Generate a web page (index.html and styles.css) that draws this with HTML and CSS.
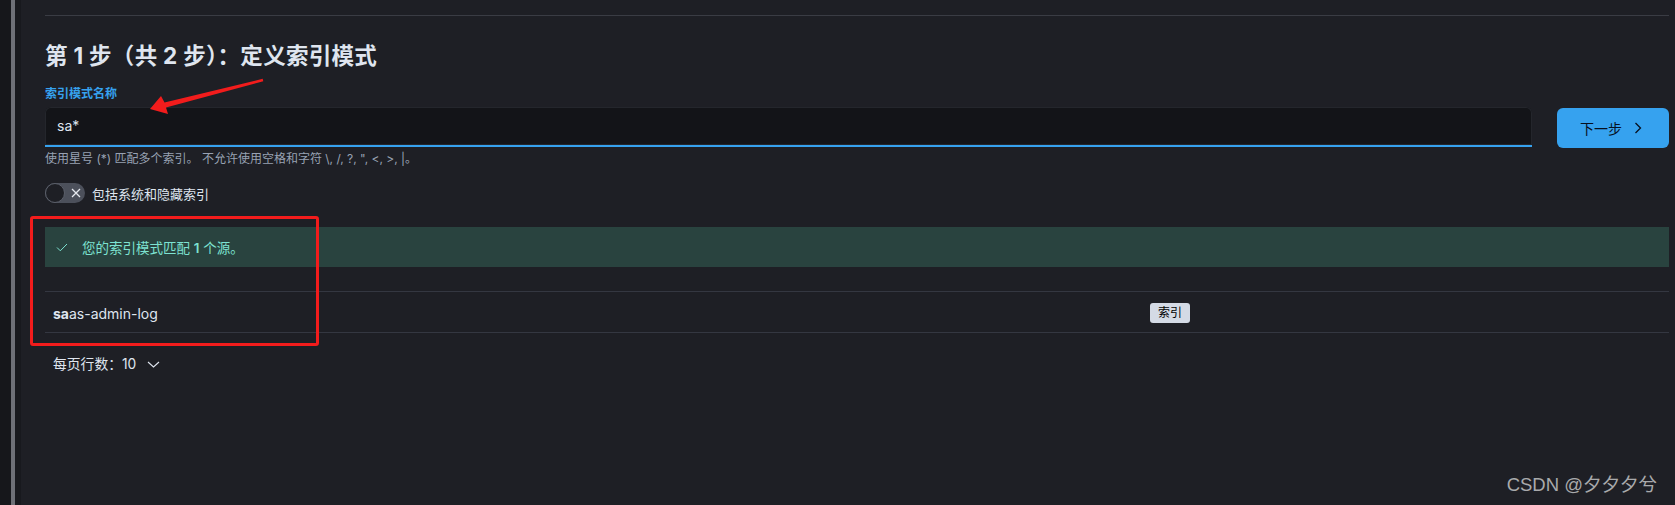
FILE: index.html
```html
<!DOCTYPE html>
<html lang="zh-CN">
<head>
  <meta charset="UTF-8">
  <title>创建索引模式</title>
  <link rel="stylesheet" href="styles.css">
</head>
<body>
  <div class="rail"></div>
  <div class="rail-bar"></div>
  <div class="rail-gap"></div>

  <main class="panel">
    <div class="rule"></div>
    <h1>第 1 步（共 2 步）：定义索引模式</h1>

    <div class="field-row">
      <div class="field">
        <label class="field-label">索引模式名称</label>
        <div class="input">sa*</div>
        <div class="help">使用星号 (*) 匹配多个索引。 不允许使用空格和字符 \, /, ?, ", &lt;, &gt;, |。</div>
      </div>
      <button class="next-btn">下一步
        <svg width="8" height="12" viewBox="0 0 8 12"><path d="M1.5 1 L6.5 6 L1.5 11" fill="none" stroke="#07101f" stroke-width="1.3"/></svg>
      </button>
    </div>

    <div class="toggle-row">
      <span class="switch">
        <span class="knob"></span>
        <svg class="switch-x" width="10" height="10" viewBox="0 0 10 10"><path d="M1 1 L9 9 M9 1 L1 9" stroke="#e6e9ef" stroke-width="1.3"/></svg>
      </span>
      <span class="toggle-label">包括系统和隐藏索引</span>
    </div>

    <div class="callout">
      <svg width="12" height="9" viewBox="0 0 12 9"><path d="M1 4.5 L4.3 7.8 L11 1" fill="none" stroke="#7de2d1" stroke-width="1"/></svg>
      <span>您的索引模式匹配 <b>1</b> 个源。</span>
    </div>

    <div class="table">
      <div class="cell name"><b>sa</b>as-admin-log</div>
      <div class="cell"><span class="badge">索引</span></div>
    </div>

    <div class="pager">每页行数：10
      <svg width="13" height="7" viewBox="0 0 13 7"><path d="M1 1 L6.5 6 L12 1" fill="none" stroke="#dfe5ef" stroke-width="1.1"/></svg>
    </div>
  </main>

  <svg class="arrow" width="1675" height="505" viewBox="0 0 1675 505">
    <polygon points="150,109 168,114 166,107.5 263.3,81.2 262.7,78.8 164.5,102.5 161,96" fill="#f21c1c"/>
  </svg>
  <div class="mark-box"></div>
  <div class="watermark">CSDN @夕夕夕兮</div>
</body>
</html>
```

FILE: styles.css
```css
html, body {
  margin: 0;
  height: 100%;
}
body {
  display: flex;
  background: #1e1f25;
  font-family: Inter, "Noto Sans CJK SC", sans-serif;
  color: #dfe5ef;
  overflow: hidden;
}
.rail {
  width: 11px;
  background: #16171b;
}
.rail-bar {
  width: 4px;
  background: #6e7077;
}
.rail-gap {
  width: 6px;
  background: #18191e;
}
.panel {
  flex: 1;
  padding: 15px 6px 0 24px;
}
.rule {
  height: 1px;
  background: #3a3c44;
}
h1 {
  margin: 25px 0 0;
  font-size: 22.5px;
  line-height: 30px;
  letter-spacing: 0.3px;
  font-weight: 700;
  color: #dfe5ef;
}
.field-row {
  display: flex;
  gap: 25px;
  align-items: flex-start;
  margin-top: 15px;
}
.field {
  flex: 1;
}
.field-label {
  display: block;
  font-size: 12px;
  line-height: 16px;
  font-weight: 600;
  color: #36a2ef;
}
.input {
  margin-top: 5px;
  height: 38px;
  box-sizing: content-box;
  background: #131418;
  border-radius: 6px 6px 0 0;
  border-bottom: 2px solid #36a2ef;
  box-shadow: inset 0 0 0 1px #24262c;
  padding: 0 12px;
  font-size: 14px;
  line-height: 38px;
  color: #dfe5ef;
}
.help {
  margin-top: 4px;
  font-size: 12px;
  line-height: 16px;
  color: #98a2b3;
}
.next-btn {
  margin-top: 22px;
  width: 112px;
  height: 40px;
  display: flex;
  align-items: center;
  justify-content: center;
  gap: 12px;
  background: #36a2ef;
  border: none;
  border-radius: 6px;
  font-family: Inter, "Noto Sans CJK SC", sans-serif;
  font-size: 14px;
  color: #07101f;
  padding: 0 4px 0 0;
}
.toggle-row {
  display: flex;
  align-items: center;
  gap: 7px;
  margin-top: 16px;
  height: 20px;
}
.switch {
  position: relative;
  width: 40px;
  height: 20px;
  border-radius: 10px;
  background: #4c505b;
  display: flex;
  align-items: center;
}
.knob {
  width: 18px;
  height: 18px;
  border-radius: 50%;
  background: #1e1f25;
  border: 1px solid #5b5f6a;
}
.switch-x {
  margin-left: 6px;
}
.toggle-label {
  font-size: 13px;
  color: #dfe5ef;
}
.callout {
  margin-top: 24px;
  height: 40px;
  display: flex;
  align-items: center;
  gap: 14px;
  padding: 0 11px;
  background: #29433f;
  color: #7de2d1;
  font-size: 13.5px;
}
.callout b {
  font-weight: 600;
}
.table {
  margin-top: 24px;
  display: grid;
  grid-template-columns: 1097px 1fr;
  border-top: 1px solid #343741;
  border-bottom: 1px solid #343741;
  height: 40px;
}
.cell {
  display: flex;
  align-items: center;
  padding: 2px 8px 0;
  font-size: 14px;
}
.badge {
  background: #d4dae5;
  color: #000;
  font-size: 12px;
  line-height: 20px;
  padding: 0 8px;
  border-radius: 3px;
}
.pager {
  margin-top: 20px;
  padding-left: 8px;
  display: flex;
  align-items: center;
  gap: 11px;
  font-size: 13.8px;
  line-height: 22px;
}
.arrow {
  position: absolute;
  left: 0;
  top: 0;
  pointer-events: none;
}
.mark-box {
  position: absolute;
  left: 30px;
  top: 216px;
  width: 283px;
  height: 124px;
  border: 3px solid #f21c1c;
  border-radius: 3px;
}
.watermark {
  position: absolute;
  right: 18px;
  top: 473px;
  font-family: "Liberation Sans", "Noto Sans CJK SC", sans-serif;
  font-size: 18.5px;
  line-height: 24px;
  color: #a9aaac;
}
```
